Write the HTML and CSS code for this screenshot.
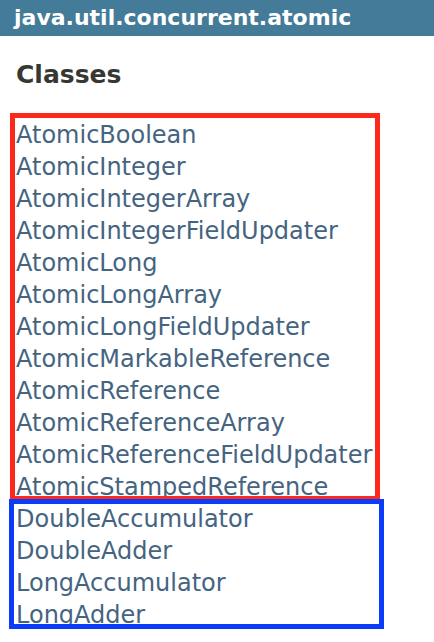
FILE: index.html
```html
<!DOCTYPE html>
<html>
<head>
<meta charset="utf-8">
<link rel="stylesheet" href="styles.css">
</head>
<body>
<header class="bar">java.util.concurrent.atomic</header>
<main class="frame">
  <h2 class="title">Classes</h2>
  <ul class="list">
    <li><a href="#">AtomicBoolean</a></li>
    <li><a href="#">AtomicInteger</a></li>
    <li><a href="#">AtomicIntegerArray</a></li>
    <li><a href="#">AtomicIntegerFieldUpdater</a></li>
    <li><a href="#">AtomicLong</a></li>
    <li><a href="#">AtomicLongArray</a></li>
    <li><a href="#">AtomicLongFieldUpdater</a></li>
    <li><a href="#">AtomicMarkableReference</a></li>
    <li><a href="#">AtomicReference</a></li>
    <li><a href="#">AtomicReferenceArray</a></li>
    <li><a href="#">AtomicReferenceFieldUpdater</a></li>
    <li><a href="#">AtomicStampedReference</a></li>
    <li><a href="#">DoubleAccumulator</a></li>
    <li><a href="#">DoubleAdder</a></li>
    <li><a href="#">LongAccumulator</a></li>
    <li><a href="#">LongAdder</a></li>
  </ul>
  <div class="mark mark-red"></div>
  <div class="mark mark-blue"></div>
</main>
</body>
</html>
```
FILE: styles.css
```css
html, body {
  margin: 0;
  padding: 0;
  background: #ffffff;
  font-family: "DejaVu Sans", "Liberation Sans", sans-serif;
}
.bar {
  height: 36px;
  line-height: 36px;
  background: #437b99;
  color: #ffffff;
  font-weight: bold;
  font-size: 22px;
  padding-left: 14px;
  white-space: nowrap;
  overflow: hidden;
}
.frame {
  position: relative;
  height: 582px;
  padding-top: 24px;
}
.title {
  margin: 0;
  padding-left: 16px;
  font-size: 25px;
  font-weight: bold;
  color: #353833;
  line-height: 29px;
}
.list {
  list-style: none;
  margin: 30px 0 0 0;
  padding: 0 0 0 16px;
  font-size: 24px;
  line-height: 32px;
}
.list a {
  color: #44647f;
  text-decoration: none;
  white-space: nowrap;
}
.mark {
  position: absolute;
  box-sizing: border-box;
  border-style: solid;
  border-width: 5px;
}
.mark-red {
  left: 10px;
  top: 77px;
  width: 370px;
  height: 388px;
  border-color: #fd2a1c;
}
.mark-blue {
  left: 9px;
  top: 463px;
  width: 375px;
  height: 130px;
  border-color: #0a3cfa;
}
```
